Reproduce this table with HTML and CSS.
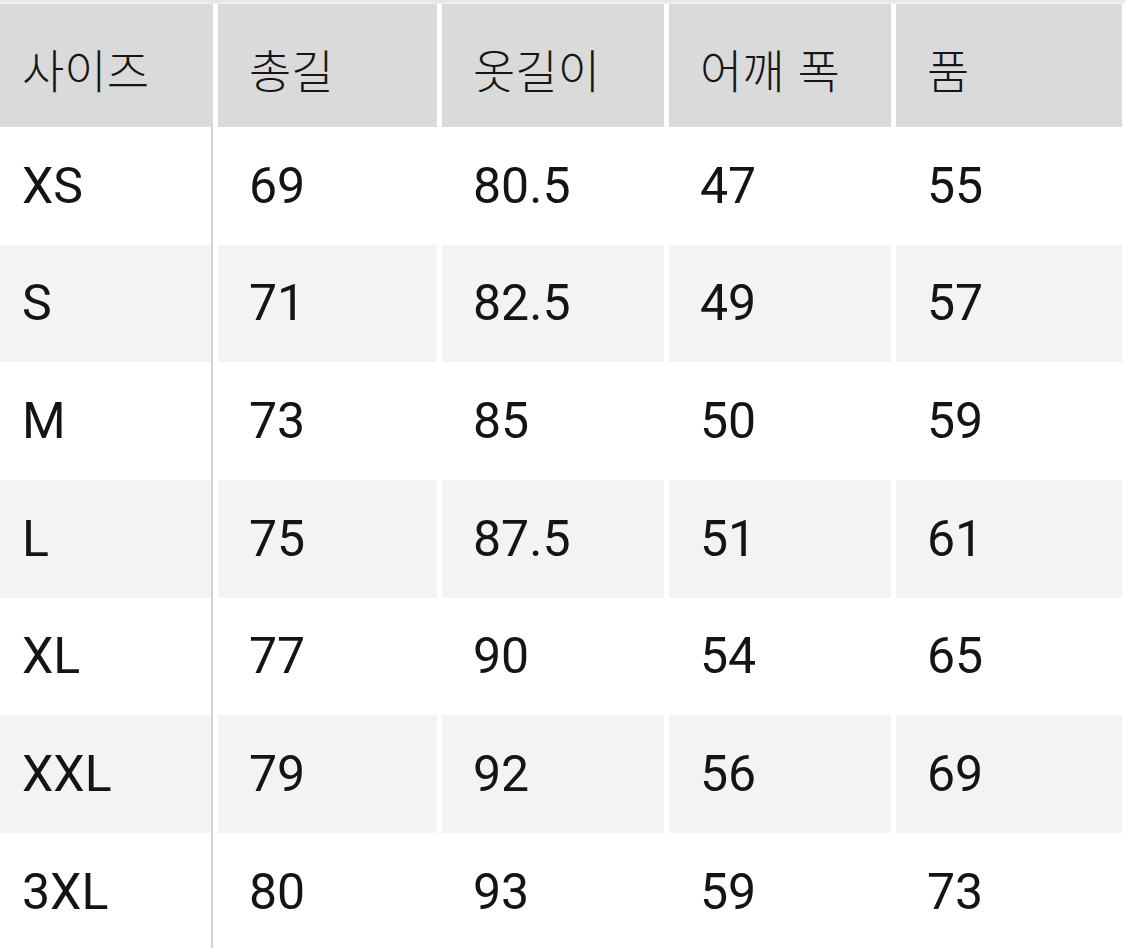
FILE: index.html
```html
<!DOCTYPE html>
<html lang="ko">
<head>
<meta charset="utf-8">
<title>사이즈 표</title>
<link rel="stylesheet" href="styles.css">
</head>
<body>
<div class="top-edge"></div>
<div class="size-table">
  <div class="row head">
    <div class="cell first">사이즈</div>
    <div class="cell">총길</div>
    <div class="cell">옷길이</div>
    <div class="cell">어깨 폭</div>
    <div class="cell">품</div>
  </div>
  <div class="row">
    <div class="cell first">XS</div>
    <div class="cell">69</div>
    <div class="cell">80.5</div>
    <div class="cell">47</div>
    <div class="cell">55</div>
  </div>
  <div class="row alt">
    <div class="cell first">S</div>
    <div class="cell">71</div>
    <div class="cell">82.5</div>
    <div class="cell">49</div>
    <div class="cell">57</div>
  </div>
  <div class="row">
    <div class="cell first">M</div>
    <div class="cell">73</div>
    <div class="cell">85</div>
    <div class="cell">50</div>
    <div class="cell">59</div>
  </div>
  <div class="row alt">
    <div class="cell first">L</div>
    <div class="cell">75</div>
    <div class="cell">87.5</div>
    <div class="cell">51</div>
    <div class="cell">61</div>
  </div>
  <div class="row">
    <div class="cell first">XL</div>
    <div class="cell">77</div>
    <div class="cell">90</div>
    <div class="cell">54</div>
    <div class="cell">65</div>
  </div>
  <div class="row alt">
    <div class="cell first">XXL</div>
    <div class="cell">79</div>
    <div class="cell">92</div>
    <div class="cell">56</div>
    <div class="cell">69</div>
  </div>
  <div class="row">
    <div class="cell first">3XL</div>
    <div class="cell">80</div>
    <div class="cell">93</div>
    <div class="cell">59</div>
    <div class="cell">73</div>
  </div>
</div>
</body>
</html>
```
FILE: styles.css
```css
html, body {
  margin: 0;
  padding: 0;
  background: #ffffff;
}

body {
  width: 1125px;
  height: 948px;
  overflow: hidden;
  font-family: Roboto, "Noto Sans CJK KR", sans-serif;
  color: #141414;
}

.top-edge {
  height: 3px;
  background: #e8e8e8;
  border-bottom: 1px solid #f4f4f4;
}

.size-table {
  display: flex;
  flex-direction: column;
  padding-right: 3px;
}

.row {
  display: grid;
  grid-template-columns: 213px 219px 222px 222px 1fr;
  column-gap: 5px;
  height: 117.67px;
  background: #ffffff;
}

.row.head {
  height: 123px;
}

.cell {
  display: flex;
  align-items: center;
  padding-left: 31px;
  font-size: 50px;
  font-weight: 400;
  background: #ffffff;
}

.cell.first {
  padding-left: 22px;
  border-right: 2px solid #d3d3d3;
}

.row.alt .cell {
  background: #f3f3f3;
}

.row.head .cell {
  background: #dadada;
  font-family: "Noto Sans CJK KR", sans-serif;
  font-size: 46px;
  font-weight: 300;
  color: #161616;
  padding-top: 4px;
}

.row.head .cell.first {
  border-right: none;
}
```
